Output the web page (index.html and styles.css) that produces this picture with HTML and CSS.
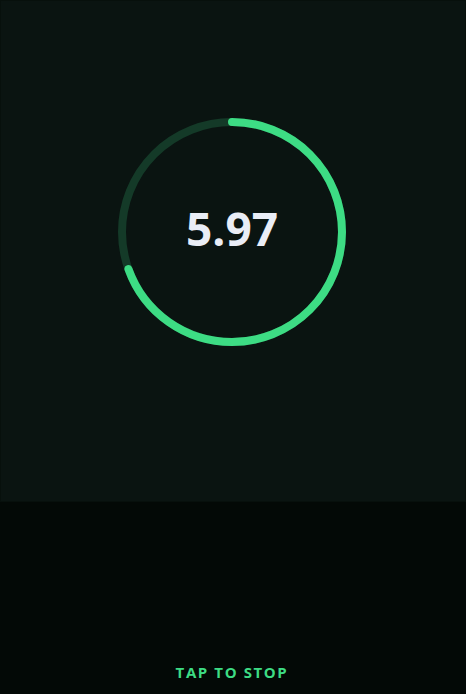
FILE: index.html
```html
<!DOCTYPE html>
<html lang="en">
<head>
<meta charset="utf-8">
<title>Timer</title>
<link rel="stylesheet" href="styles.css">
</head>
<body>
<main class="app">
  <section class="panel">
    <div class="dial">
      <svg class="ring" width="236" height="236" viewBox="0 0 236 236">
        <circle class="track" cx="118" cy="118" r="110"></circle>
        <circle class="progress" cx="118" cy="118" r="110" transform="rotate(-90 118 118)"></circle>
      </svg>
      <div class="value">5.97</div>
    </div>
  </section>
  <footer class="footer">
    <button class="stop">TAP TO STOP</button>
  </footer>
</main>
</body>
</html>
```
FILE: styles.css
```css
html, body {
  margin: 0;
  padding: 0;
  background: #030906;
}
.app {
  width: 466px;
  height: 694px;
  display: flex;
  flex-direction: column;
  font-family: "Open Sans", "Noto Sans", sans-serif;
}
.panel {
  box-sizing: border-box;
  height: 502px;
  background: #0a1411;
  border: 1px solid #07100c;
  display: flex;
  justify-content: center;
  padding-top: 113px;
  padding-right: 2px;
}
.dial {
  position: relative;
  width: 236px;
  height: 236px;
}
.ring {
  display: block;
}
.track {
  fill: none;
  stroke: #143a28;
  stroke-width: 8;
}
.progress {
  fill: none;
  stroke: #3ddc84;
  stroke-width: 8;
  stroke-linecap: round;
  stroke-dasharray: 480 700;
}
.value {
  position: absolute;
  inset: 0;
  padding-bottom: 8px;
  display: flex;
  align-items: center;
  justify-content: center;
  color: #e9edf6;
  font-size: 46px;
  font-weight: 700;
  letter-spacing: 0;
}
.footer {
  flex: 1;
  display: flex;
  align-items: flex-end;
  justify-content: center;
  padding-bottom: 12px;
  padding-right: 2px;
}
.stop {
  background: none;
  border: 0;
  padding: 0;
  font-family: "Open Sans", "Noto Sans", sans-serif;
  font-size: 15px;
  font-weight: 700;
  letter-spacing: 1.6px;
  color: #3ddc84;
  line-height: 20px;
}
```
